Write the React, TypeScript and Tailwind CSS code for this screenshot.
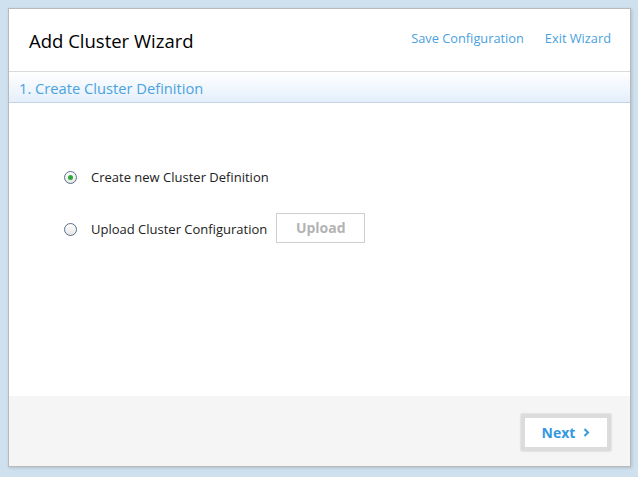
import React from "react"

const font = { fontFamily: '"Open Sans", "Noto Sans", sans-serif' }

export default function App() {
  return (
    <div
      className="w-[638px] h-[477px] bg-[#cfe0ee] pt-2 pl-2"
      style={font}
    >
      <div className="w-[623px] h-[459px] bg-white border border-[#b9b9b9] shadow-[1px_1px_3px_rgba(0,0,0,0.15)] flex flex-col">
        {/* header */}
        <div className="h-[63px] flex items-center justify-between border-b border-[#dadada] pl-5 pr-[19px]">
          <h1 className="text-[18.5px] font-medium text-black mt-0.5">Add Cluster Wizard</h1>
          <div className="flex gap-[21px] text-[12.8px] text-[#4a9fe0] -mt-0.5">
            <a>Save Configuration</a>
            <a>Exit Wizard</a>
          </div>
        </div>

        {/* step bar */}
        <div className="h-[31px] flex items-center pl-2.5 border-b border-[#c5d3e2] bg-gradient-to-b from-white to-[#e4effb]">
          <span className="text-[14.7px] text-[#4aa3e0] mt-0.5">1. Create Cluster Definition</span>
        </div>

        {/* body */}
        <div className="flex-1 flex flex-col pl-[55px] pt-[65px] gap-[25px]">
          <label className="flex items-center gap-[14px] text-[13px] text-[#222]">
            <span className="w-[13px] h-[13px] rounded-full border border-[#5a6f8a] bg-gradient-to-b from-white to-[#e6e6e6] flex items-center justify-center">
              <span className="w-[5px] h-[5px] rounded-full bg-[#2eaa3c]" />
            </span>
            Create new Cluster Definition
          </label>
          <label className="flex items-center text-[13px] text-[#222]">
            <span className="w-[13px] h-[13px] rounded-full border border-[#5a6f8a] bg-gradient-to-b from-white to-[#e6e6e6] mr-[14px]" />
            Upload Cluster Configuration
            <button className="ml-[9px] mb-1 w-[89px] h-[30px] border border-[#cfcfcf] text-[14px] font-bold text-[#b3b3b3]">
              Upload
            </button>
          </label>
        </div>

        {/* footer */}
        <div className="h-[70px] bg-[#f5f5f5] flex items-start justify-end pr-[19px] pt-[18px]">
          <button className="w-[90px] h-[37px] bg-white border-4 border-[#dcdcdc] shadow-[0_0_2px_rgba(0,0,0,0.2)] flex items-center justify-center gap-2 text-[14px] font-bold text-[#3598e0]">
            Next
            <svg width="7" height="9" viewBox="0 0 7 9">
              <path d="M1.5 1 L5 4.5 L1.5 8" stroke="#3598e0" strokeWidth="2" fill="none" />
            </svg>
          </button>
        </div>
      </div>
    </div>
  )
}
